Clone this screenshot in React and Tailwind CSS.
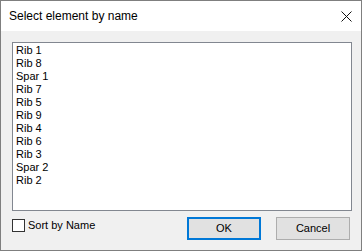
const items = ['Rib 1', 'Rib 8', 'Spar 1', 'Rib 7', 'Rib 5', 'Rib 9', 'Rib 4', 'Rib 6', 'Rib 3', 'Spar 2', 'Rib 2']

export default function App() {
  return (
    <div
      className="flex h-[251px] w-[362px] flex-col border border-[#7f7f7f] bg-[#f0f0f0] text-black"
      style={{ fontFamily: '"Liberation Sans", Arial, sans-serif' }}
    >
      <div className="flex h-[30px] shrink-0 items-center justify-between bg-white pl-[8px] pr-[9px]">
        <span className="text-[12px] leading-none">Select element by name</span>
        <svg width="11" height="11" viewBox="0 0 11 11" className="mt-[1px]">
          <path d="M0.5 0.5 L10.5 10.5 M10.5 0.5 L0.5 10.5" stroke="#111" strokeWidth="1" fill="none" />
        </svg>
      </div>

      <div className="flex flex-1 flex-col px-[11px] pt-[11px]">
        <ul className="h-[169px] w-[340px] border border-[#828790] bg-white pl-[3px] pt-[1px] text-[11px] leading-[13px]">
          {items.map((name) => (
            <li key={name} className="h-[13px]">
              {name}
            </li>
          ))}
        </ul>

        <div className="mt-[6px] flex items-start">
          <label className="mt-[2px] flex items-center gap-[3px] text-[11px] leading-[13px]">
            <span className="h-[13px] w-[13px] border border-[#333] bg-white" />
            <span className="-mt-[1px]">Sort by Name</span>
          </label>
          <button className="ml-auto h-[23px] w-[74px] border-2 border-[#0078d7] bg-[#e1e1e1] text-[11px] leading-none">
            OK
          </button>
          <button className="ml-[15px] h-[23px] w-[74px] border border-[#adadad] bg-[#e1e1e1] text-[11px] leading-none">
            Cancel
          </button>
        </div>
      </div>
    </div>
  )
}
